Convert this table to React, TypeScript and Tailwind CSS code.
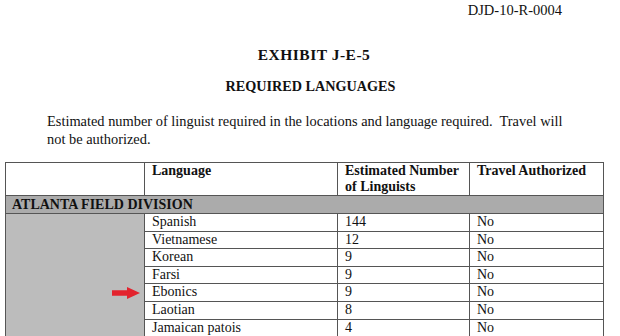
const rows = [
  { lang: 'Spanish', count: '144', travel: 'No' },
  { lang: 'Vietnamese', count: '12', travel: 'No' },
  { lang: 'Korean', count: '9', travel: 'No' },
  { lang: 'Farsi', count: '9', travel: 'No' },
  { lang: 'Ebonics', count: '9', travel: 'No' },
  { lang: 'Laotian', count: '8', travel: 'No' },
  { lang: 'Jamaican patois', count: '4', travel: 'No' },
]

const cell = 'border border-[#555] px-[7px] align-top'

export default function App() {
  return (
    <div
      className="w-[620px] h-[336px] overflow-hidden bg-white text-[#111]"
      style={{ fontFamily: '"Liberation Serif", "Times New Roman", serif' }}
    >
      {/* doc id */}
      <div className="flex justify-end pr-[58px] pt-[2px]">
        <span className="text-[14.5px] leading-[17px]">DJD-10-R-0004</span>
      </div>

      {/* titles */}
      <h1 className="mt-[27px] text-center font-bold text-[15.5px] leading-[17px] tracking-[0.5px] pl-[8px]">EXHIBIT J-E-5</h1>
      <h2 className="mt-[15px] text-center font-bold text-[14.2px] leading-[17px] pl-[1px]">REQUIRED LANGUAGES</h2>

      <p className="mt-[17px] pl-[47px] pr-[56px] text-[14.4px] leading-[18px]">
        Estimated number of linguist required in the locations and language required.&nbsp; Travel will not be authorized.
      </p>

      {/* table */}
      <div className="relative mt-[14px] ml-[5px]">
        <table className="table-fixed border-collapse w-[598px] text-[14px] leading-[16px]">
          <colgroup>
            <col className="w-[139px]" />
            <col className="w-[193px]" />
            <col className="w-[132px]" />
            <col className="w-[134px]" />
          </colgroup>
          <thead>
            <tr className="h-[33px] font-bold">
              <td className={cell}></td>
              <td className={cell}>Language</td>
              <td className={cell}>
                Estimated Number
                <br />
                of Linguists
              </td>
              <td className={cell}>Travel Authorized</td>
            </tr>
          </thead>
          <tbody>
            <tr className="h-[18px] bg-[#ababab]">
              <td colSpan={4} className="border border-[#555] px-[6px] font-bold text-[14px] leading-[15px]">
                ATLANTA FIELD DIVISION
              </td>
            </tr>
            {rows.map((r, i) => (
              <tr key={r.lang} className="h-[17.6px]">
                {i === 0 && <td rowSpan={rows.length + 1} className="border border-[#555] bg-[#bcbcbc]"></td>}
                <td className={cell}>{r.lang}</td>
                <td className={cell}>{r.count}</td>
                <td className={cell}>{r.travel}</td>
              </tr>
            ))}
            <tr className="h-[17.6px]">
              <td className={cell}>&nbsp;</td>
              <td className={cell}></td>
              <td className={cell}></td>
            </tr>
          </tbody>
        </table>

        {/* red arrow pointing at Ebonics */}
        <svg className="absolute left-[107px] top-[125px]" width="28" height="12" viewBox="0 0 28 12">
          <path d="M0 3.2 H15 V0 L28 6 L15 12 V8.8 H0 Z" fill="#e3232e" />
        </svg>
      </div>
    </div>
  )
}
